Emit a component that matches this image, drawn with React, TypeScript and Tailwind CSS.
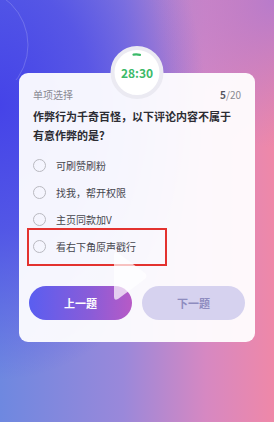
import React from "react";

const options = ["可刷赞刷粉", "找我，帮开权限", "主页同款加V", "看右下角原声戳行"];

function Timer() {
    return (
        <div className="absolute left-1/2 top-[-27px] flex h-[53px] w-[53px] -translate-x-1/2 items-center justify-center rounded-full border-[4px] border-[#ebeaf2] bg-white">
            <svg className="absolute inset-0 h-full w-full" viewBox="0 0 45 45">
                <path d="M19 4.6 A18 18 0 0 1 25.5 4.8" fill="none" stroke="#3cba69" strokeWidth="2.2" strokeLinecap="round" />
            </svg>
            <span className="text-[12px] font-bold leading-none text-[#3cba69]">28:30</span>
        </div>
    );
}

export default function App() {
    return (
        <div
            className="relative h-[422px] w-[274px] overflow-hidden bg-[linear-gradient(90deg,#6e88e0_0%,#9a88da_45%,#d688c2_75%,#ef88a8_100%)] px-[19px] pt-[73px]"
            style={{ fontFamily: '"Noto Sans CJK SC", "Noto Sans", sans-serif' }}
        >
            <div className="pointer-events-none absolute inset-0 bg-[radial-gradient(ellipse_75%_65%_at_0%_25%,#4543e8_0%,rgba(72,70,232,0.75)_45%,transparent_100%)]" />
            <div className="pointer-events-none absolute inset-0 bg-[radial-gradient(ellipse_45%_35%_at_100%_0%,rgba(170,120,212,0.8),transparent)]" />
            <svg className="pointer-events-none absolute left-0 top-0" width="60" height="80">
                <circle cx="-30" cy="45" r="58" fill="none" stroke="rgba(255,255,255,0.18)" strokeWidth="1" />
            </svg>

            <div className="relative rounded-[9px] bg-white/[0.94] px-[14px] pb-[22px] pt-[14px]">
                <Timer />

                <div className="flex items-center justify-between text-[10px] leading-[16px] text-[#8a8a93]">
                    <span>单项选择</span>
                    <span>
                        <b className="font-bold text-[#55555e]">5</b>/20
                    </span>
                </div>

                <p className="mt-[4px] text-[11px] font-bold leading-[19px] text-[#2c2c33]">
                    作弊行为千奇百怪，以下评论内容不属于有意作弊的是？
                </p>

                <div className="mt-[7px] flex flex-col">
                    {options.map((o, i) => (
                        <div key={o} className="relative flex h-[27px] items-center gap-[10px]">
                            <span className="h-[13px] w-[13px] rounded-full border border-[#b9b9c0]" />
                            <span className="text-[10px] text-[#45454d]">{o}</span>
                            {i === 3 && (
                                <div className="absolute left-[-6px] top-[-5px] h-[38px] w-[140px] border-2 border-[#e3322f]" />
                            )}
                        </div>
                    ))}
                </div>

                <div className="mx-[-4px] mt-[26px] flex gap-[10px]">
                    <button className="h-[34px] flex-1 rounded-full bg-[linear-gradient(90deg,#5a5ef0,#8a5cd8_60%,#b75ac6)] text-[11px] font-bold text-white">
                        上一题
                    </button>
                    <button className="h-[34px] flex-1 rounded-full bg-[#d6d2ef] text-[11px] font-bold text-[#8e8cbf]">
                        下一题
                    </button>
                </div>
            </div>

            <svg className="pointer-events-none absolute left-[111px] top-[250px]" width="38" height="52" viewBox="0 0 38 52">
                <path d="M3 5 Q3 1 7 3 L34 23 Q37 26 34 29 L7 49 Q3 51 3 47 Z" fill="rgba(255,255,255,0.7)" />
            </svg>
        </div>
    );
}
